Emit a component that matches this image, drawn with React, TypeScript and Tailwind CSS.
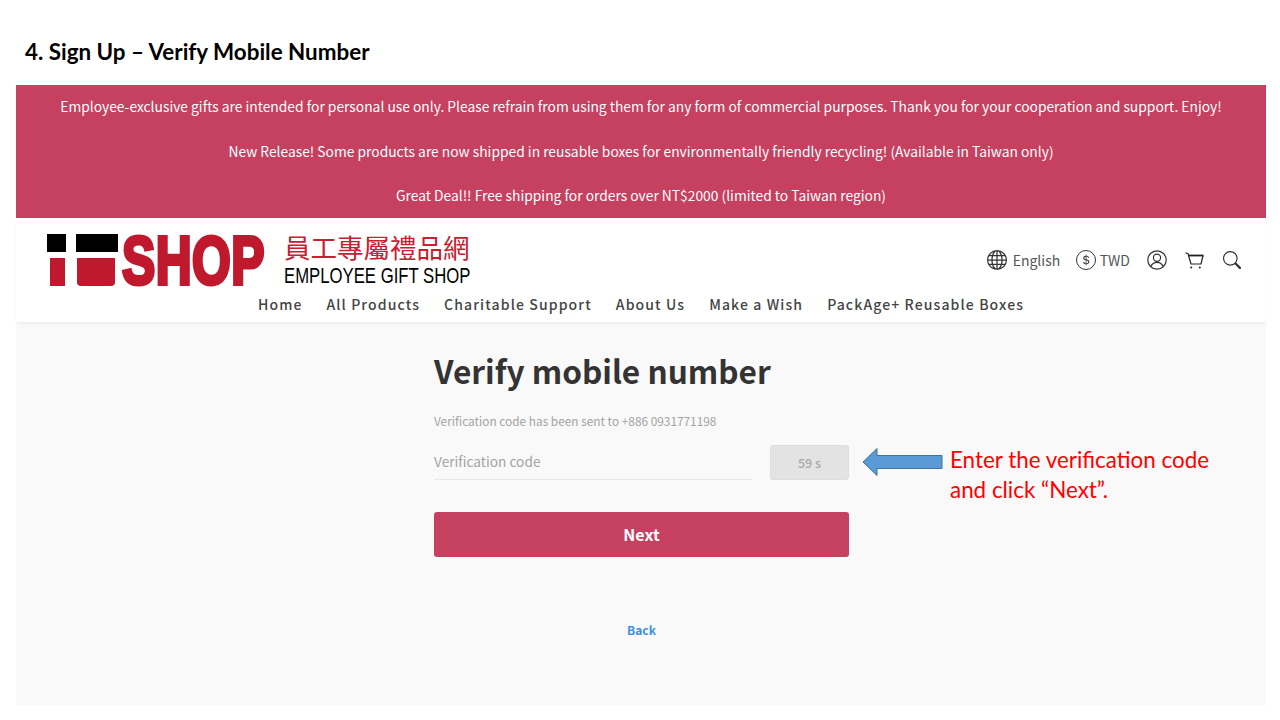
import { BsGlobe, BsCurrencyDollar, BsSearch } from "react-icons/bs";

const site = "font-['Noto_Sans_CJK_TC','Noto_Sans',sans-serif]";

const navItems = ["Home", "All Products", "Charitable Support", "About Us", "Make a Wish", "PackAge+ Reusable Boxes"];

function Logo() {
  return (
    <div className="flex items-start">
      <div className="flex flex-col w-[71px] h-[52px] shrink-0">
        <div className="flex gap-[10px]">
          <div className="w-[19px] h-[18px] bg-black" />
          <div className="w-[42px] h-[18px] bg-black" />
        </div>
        <div className="flex gap-[12px] mt-[6px] ml-[3px]">
          <div className="w-[15px] h-[28px] bg-[#c0192e]" />
          <div className="w-[38px] h-[28px] bg-[#c0192e] rounded-b-[4px]" />
        </div>
      </div>
      <div className="w-[145px] h-[54px] overflow-visible">
        <div className="origin-left scale-x-[0.83] scale-y-[1.13] font-['Liberation_Sans',sans-serif] font-bold text-[#c0192e] text-[60px] leading-[54px] tracking-[0.5px] [-webkit-text-stroke:3.5px_#c0192e] ml-[4px]">
          SHOP
        </div>
      </div>
      <div className="ml-[21px] w-[186px] -mt-[2px]">
        <div className="text-[#c8202f] text-[26.5px] leading-[30px] whitespace-nowrap font-['Noto_Sans_CJK_TC',sans-serif]">員工專屬禮品網</div>
        <div className="origin-left scale-x-[0.76] text-black text-[22px] leading-[26px] whitespace-nowrap font-['Liberation_Sans',sans-serif] mt-[1px]">
          EMPLOYEE GIFT SHOP
        </div>
      </div>
    </div>
  );
}

function UserIcon() {
  return (
    <svg width="20" height="20" viewBox="0 0 20 20" fill="none" stroke="#333" strokeWidth="1.2" className="mr-[18px]">
      <circle cx="10" cy="10" r="9.2" />
      <circle cx="10" cy="7.8" r="3.6" />
      <path d="M3.8 16.6 C5 13.6 7.4 12.4 10 12.4 S15 13.6 16.2 16.6" />
    </svg>
  );
}

function CartIcon() {
  return (
    <svg width="19" height="17" viewBox="0 0 19 17" fill="none" stroke="#222" className="mr-[19px]">
      <path d="M0.5 0.8 L3 1.6 L6 12 H16 L18 3.5" strokeWidth="1.2" />
      <path d="M3.4 3.5 H18.5" strokeWidth="1.8" />
      <circle cx="6.2" cy="15.4" r="1" fill="#222" stroke="none" />
      <circle cx="14.8" cy="15.4" r="1" fill="#222" stroke="none" />
    </svg>
  );
}

export default function App() {
  return (
    <div className="relative w-[1280px] h-[720px] bg-white overflow-hidden">
      <h1 className="pl-[25px] pt-[38px] h-[85px] font-['Lato',sans-serif] font-bold text-[22.4px] leading-[28px] text-black">
        4. Sign Up – Verify Mobile Number
      </h1>

      <div className="mx-4 w-[1250px]">
        <div className={`${site} h-[133px] bg-[#c6405f] text-white text-[13.82px] text-center flex flex-col justify-between pt-[10px] pb-[12px] leading-[22px]`}>
          <p>Employee-exclusive gifts are intended for personal use only. Please refrain from using them for any form of commercial purposes. Thank you for your cooperation and support. Enjoy!</p>
          <p>New Release! Some products are now shipped in reusable boxes for environmentally friendly recycling! (Available in Taiwan only)</p>
          <p>Great Deal!! Free shipping for orders over NT$2000 (limited to Taiwan region)</p>
        </div>

        <header className={`${site} h-[104px] bg-white shadow-[0_2px_3px_-1px_rgba(0,0,0,0.08)] relative`}>
          <div className="flex justify-between pl-[31px] pr-[25px] pt-[16px] h-[76px]">
            <Logo />
            <div className="flex items-center h-[52px] text-[#555] text-[14px]">
              <span className="flex items-center gap-[6px] mr-[17px]">
                <BsGlobe size={20} className="text-[#333]" />
                <span className="w-[46px]">English</span>
              </span>
              <span className="flex items-center gap-[4px] mr-[17px]">
                <span className="w-[20px] h-[20px] rounded-full border border-[#333] flex items-center justify-center">
                  <BsCurrencyDollar size={12} className="text-[#333]" />
                </span>
                TWD
              </span>
              <UserIcon />
              <CartIcon />
              <BsSearch size={18} className="text-[#333]" />
            </div>
          </div>
          <nav className="flex justify-center gap-6 text-[14px] font-medium tracking-[1.12px] text-[#444] leading-[20px]">
            {navItems.map((item) => (
              <span key={item}>{item}</span>
            ))}
          </nav>
        </header>

        <main className={`${site} h-[383px] bg-[#f9f9f9] flex flex-col items-center`}>
          <div className="w-[415px] ml-[1px] pt-[24px]">
            <h2 className="text-[31.6px] leading-[48px] font-bold text-[#333]">Verify mobile number</h2>
            <p className="mt-[17px] text-[11.85px] leading-[20px] text-[#a3a3a3]">Verification code has been sent to +886 0931771198</p>
            <div className="flex justify-between mt-[14px]">
              <div className="w-[318px] h-[35px] border-b border-[#e8e8e8] text-[13.7px] leading-[32px] text-[#a3a3a3]">
                Verification code
              </div>
              <div className="w-[79px] h-[35px] rounded-[3px] bg-[#e3e3e3] border border-[#dedede] flex items-center justify-center text-[12.5px] font-medium text-[#a8a8a8]">
                <span className="mt-[1px]">59 s</span>
              </div>
            </div>
            <button className="mt-[32px] w-full h-[45px] rounded-[3px] bg-[#c6405f] text-white text-[16px] font-bold pb-[2px]">Next</button>
            <div className="mt-[63px] text-center text-[12px] font-bold text-[#3f8fe8] leading-[20px]">Back</div>
          </div>
        </main>
      </div>

      <svg className="absolute left-[862px] top-[447px]" width="82" height="30" viewBox="0 0 82 30">
        <path d="M1 15 L15 1.5 V8.5 H80 V21.5 H15 V28.5 Z" fill="#5b9bd5" stroke="#41719c" strokeWidth="1" />
      </svg>
      <div className="absolute left-[950px] top-[445px] font-['Lato',sans-serif] text-[22.4px] leading-[30px] text-[#ff0000]">
        <p>Enter the verification code</p>
        <p>and click “Next”.</p>
      </div>
    </div>
  );
}
